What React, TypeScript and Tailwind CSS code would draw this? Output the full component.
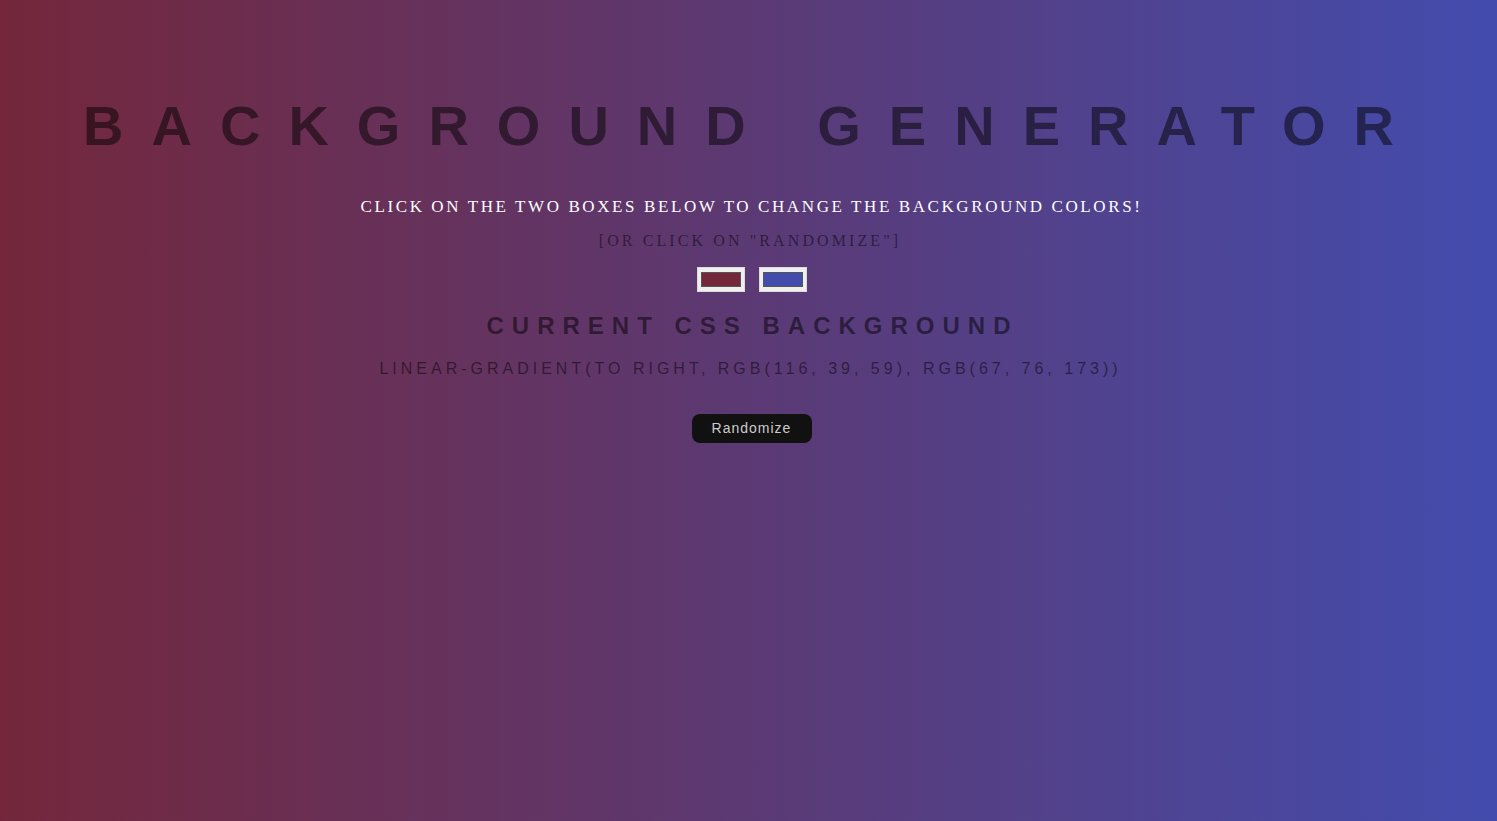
import React from "react";

export default function App() {
  return (
    <div
      className="w-full h-[821px] flex flex-col items-center text-center"
      style={{ background: "linear-gradient(to right, rgb(116, 39, 59), rgb(67, 76, 173))" }}
    >
      <h1 className="mt-[94px] font-['Liberation_Sans',Arial,sans-serif] font-bold text-[56px] leading-[64px] tracking-[0.5em] pl-[8px] text-black/50 uppercase">
        Background Generator
      </h1>
      <h3 className="mt-[39px] font-['Liberation_Serif','Times_New_Roman',serif] text-[17px] leading-[20px] tracking-[2.6px] pl-[6px] text-white uppercase">
        Click on the two boxes below to change the background colors!
      </h3>
      <p className="mt-[14px] font-['Liberation_Serif','Times_New_Roman',serif] text-[16px] leading-[20px] tracking-[3.1px] pl-[3px] text-black/50 uppercase">
        [or click on "Randomize"]
      </p>
      <div className="mt-[16px] ml-[6px] flex gap-[14px]">
        <div className="w-[48px] h-[25px] bg-[#efefef] border border-[#dcdcdc] px-[3px] py-[4px]">
          <div className="w-full h-full bg-[#74273b] border border-[#555]" />
        </div>
        <div className="w-[48px] h-[25px] bg-[#efefef] border border-[#dcdcdc] px-[3px] py-[4px]">
          <div className="w-full h-full bg-[#434cad] border border-[#555]" />
        </div>
      </div>
      <h2 className="mt-[20px] font-['Liberation_Sans',Arial,sans-serif] font-bold text-[24px] leading-[28px] tracking-[8px] pl-[8px] text-black/50 uppercase">
        Current CSS Background
      </h2>
      <h3 className="mt-[19px] font-['Liberation_Sans',Arial,sans-serif] text-[16px] leading-[20px] tracking-[4px] pl-[4px] text-black/50 uppercase">
        linear-gradient(to right, rgb(116, 39, 59), rgb(67, 76, 173))
      </h3>
      <button className="mt-[35px] ml-[6px] w-[120px] h-[29px] rounded-[8px] bg-[#111] text-[#ccc] font-['Liberation_Sans',Arial,sans-serif] text-[14px] tracking-[1px]">
        Randomize
      </button>
    </div>
  );
}
